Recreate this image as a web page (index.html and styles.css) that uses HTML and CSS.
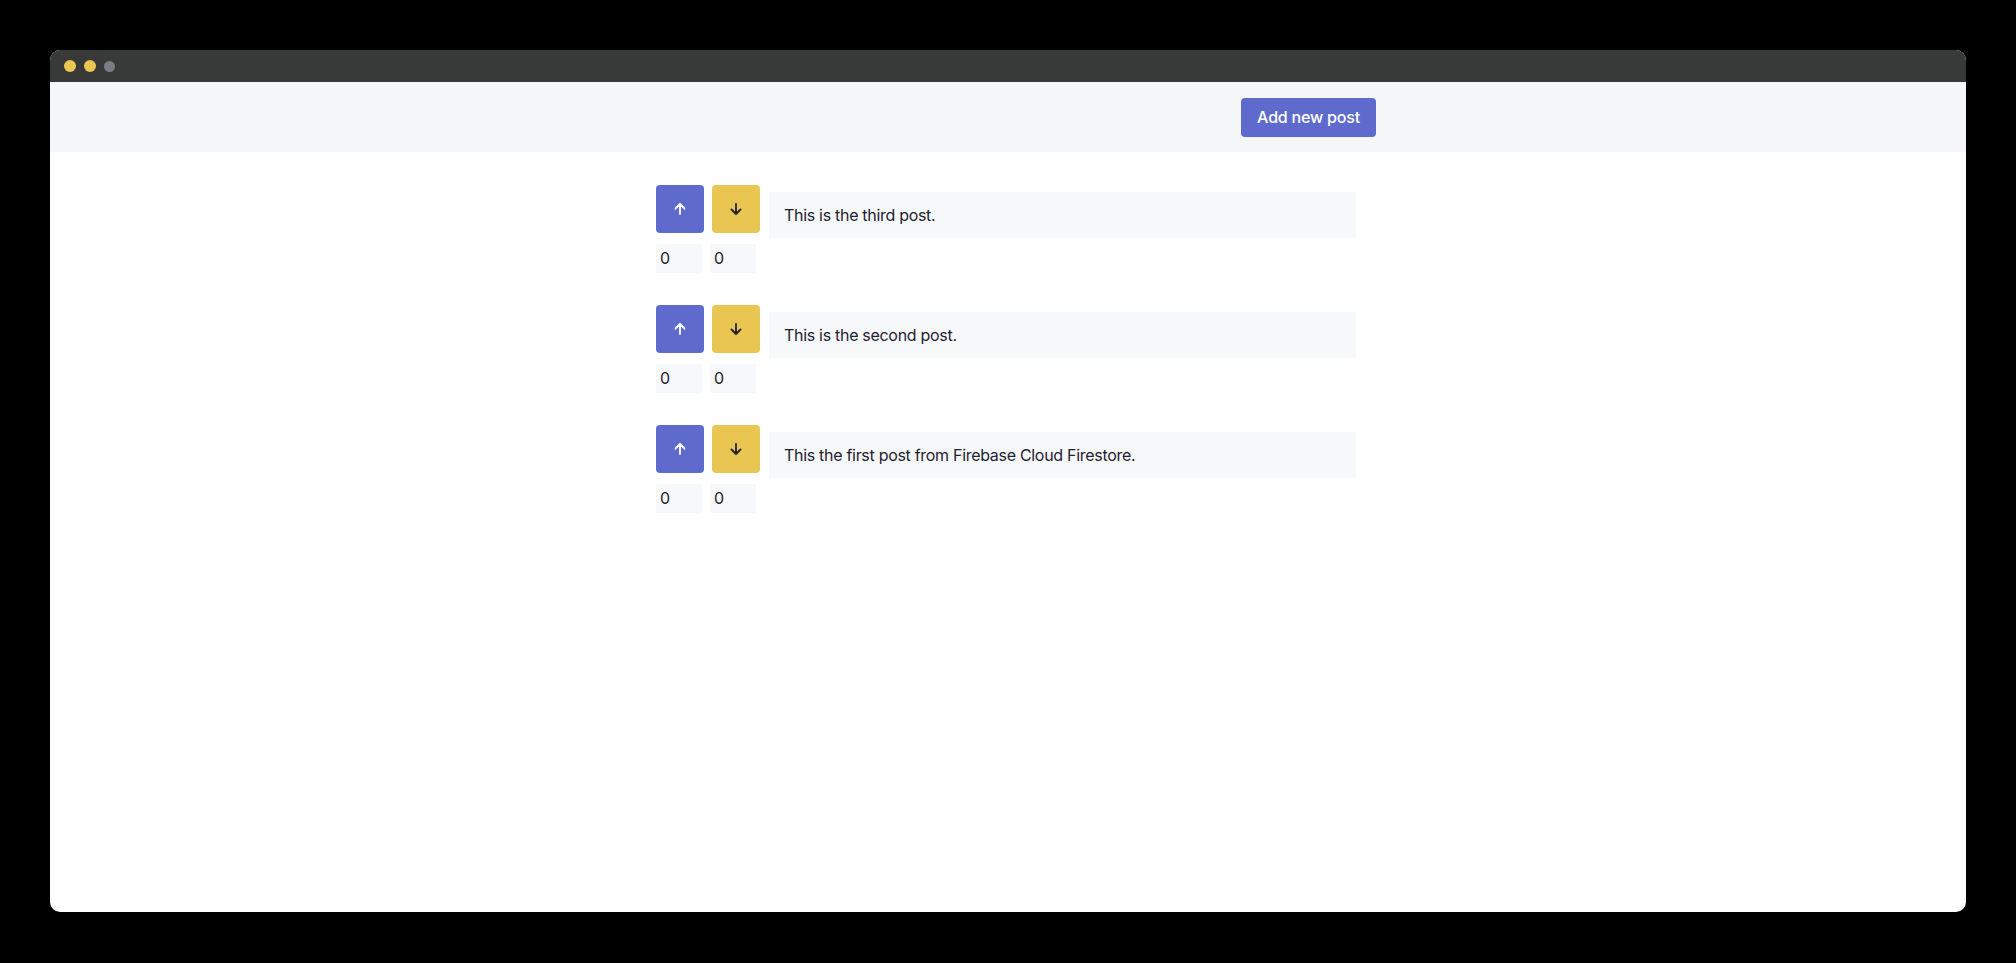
FILE: index.html
```html
<!DOCTYPE html>
<html lang="en">
<head>
<meta charset="utf-8">
<title>Posts</title>
<link rel="stylesheet" href="styles.css">
</head>
<body>
<div class="window">
  <div class="titlebar">
    <span class="light light-yellow"></span>
    <span class="light light-yellow"></span>
    <span class="light light-gray"></span>
  </div>
  <header class="header">
    <div class="header-inner">
      <button class="add-btn">Add new post</button>
    </div>
  </header>
  <main class="content">
    <div class="post">
      <div class="votes">
        <div class="vote-buttons">
          <button class="vote vote-up"><svg width="14" height="14" viewBox="0 0 14 14"><path d="M7 12V2M2.5 6.5L7 2l4.5 4.5" fill="none" stroke="#fff" stroke-width="1.8" stroke-linecap="round" stroke-linejoin="round"/></svg></button>
          <button class="vote vote-down"><svg width="14" height="14" viewBox="0 0 14 14"><path d="M7 2v10M2.5 7.5L7 12l4.5-4.5" fill="none" stroke="#1f2230" stroke-width="1.8" stroke-linecap="round" stroke-linejoin="round"/></svg></button>
        </div>
        <div class="counts">
          <div class="count">0</div>
          <div class="count">0</div>
        </div>
      </div>
      <div class="post-text">This is the third post.</div>
    </div>
    <div class="post">
      <div class="votes">
        <div class="vote-buttons">
          <button class="vote vote-up"><svg width="14" height="14" viewBox="0 0 14 14"><path d="M7 12V2M2.5 6.5L7 2l4.5 4.5" fill="none" stroke="#fff" stroke-width="1.8" stroke-linecap="round" stroke-linejoin="round"/></svg></button>
          <button class="vote vote-down"><svg width="14" height="14" viewBox="0 0 14 14"><path d="M7 2v10M2.5 7.5L7 12l4.5-4.5" fill="none" stroke="#1f2230" stroke-width="1.8" stroke-linecap="round" stroke-linejoin="round"/></svg></button>
        </div>
        <div class="counts">
          <div class="count">0</div>
          <div class="count">0</div>
        </div>
      </div>
      <div class="post-text">This is the second post.</div>
    </div>
    <div class="post">
      <div class="votes">
        <div class="vote-buttons">
          <button class="vote vote-up"><svg width="14" height="14" viewBox="0 0 14 14"><path d="M7 12V2M2.5 6.5L7 2l4.5 4.5" fill="none" stroke="#fff" stroke-width="1.8" stroke-linecap="round" stroke-linejoin="round"/></svg></button>
          <button class="vote vote-down"><svg width="14" height="14" viewBox="0 0 14 14"><path d="M7 2v10M2.5 7.5L7 12l4.5-4.5" fill="none" stroke="#1f2230" stroke-width="1.8" stroke-linecap="round" stroke-linejoin="round"/></svg></button>
        </div>
        <div class="counts">
          <div class="count">0</div>
          <div class="count">0</div>
        </div>
      </div>
      <div class="post-text">This the first post from Firebase Cloud Firestore.</div>
    </div>
  </main>
</div>
</body>
</html>
```

FILE: styles.css
```css
* { box-sizing: border-box; }
html, body {
  margin: 0;
  background: #000;
}
body {
  padding: 50px;
  font-family: Inter, "Liberation Sans", sans-serif;
  color: #1f2230;
}
.window {
  width: 1916px;
  height: 862px;
  background: #fff;
  border-radius: 10px;
  overflow: hidden;
}
.titlebar {
  height: 32px;
  background: #383939;
  display: flex;
  align-items: center;
  gap: 8px;
  padding-left: 14px;
}
.light {
  width: 12px;
  height: 12px;
  border-radius: 50%;
}
.light-yellow { background: #ebc653; }
.light-gray { background: #7a7d83; width: 11px; height: 11px; }
.header {
  height: 70px;
  background: #f5f6f8;
  display: flex;
  align-items: center;
}
.header-inner {
  width: 768px;
  margin: 0 auto;
  padding: 0 16px;
  display: flex;
  justify-content: flex-end;
}
.add-btn {
  height: 39px;
  width: 135px;
  padding: 0;
  border: 0;
  border-radius: 4px;
  background: #5f6bcc;
  color: #fff;
  font-family: Inter, "Liberation Sans", sans-serif;
  font-size: 16px;
  font-weight: 500;
  letter-spacing: -0.2px;
}
.content {
  width: 768px;
  margin: 0 auto;
  padding: 33px 36px 0 32px;
}
.post {
  display: flex;
  gap: 9px;
  margin-bottom: 32px;
}
.votes {
  width: 104px;
  flex: none;
}
.vote-buttons {
  display: flex;
  gap: 8px;
}
.vote {
  width: 48px;
  height: 48px;
  border: 0;
  border-radius: 4px;
  display: flex;
  align-items: center;
  justify-content: center;
  padding: 0;
}
.vote-up { background: #5f6bcc; }
.vote-down { background: #e9c552; }
.counts {
  display: flex;
  gap: 8px;
  margin-top: 11px;
}
.count {
  width: 46px;
  height: 29px;
  background: #f7f8fa;
  padding-left: 4px;
  font-size: 16px;
  line-height: 29px;
}
.post-text {
  flex: 1;
  margin-top: 7px;
  height: 46px;
  background: #f7f8fa;
  display: flex;
  align-items: center;
  padding: 0 15px;
  font-size: 16px;
  letter-spacing: -0.3px;
}
```
